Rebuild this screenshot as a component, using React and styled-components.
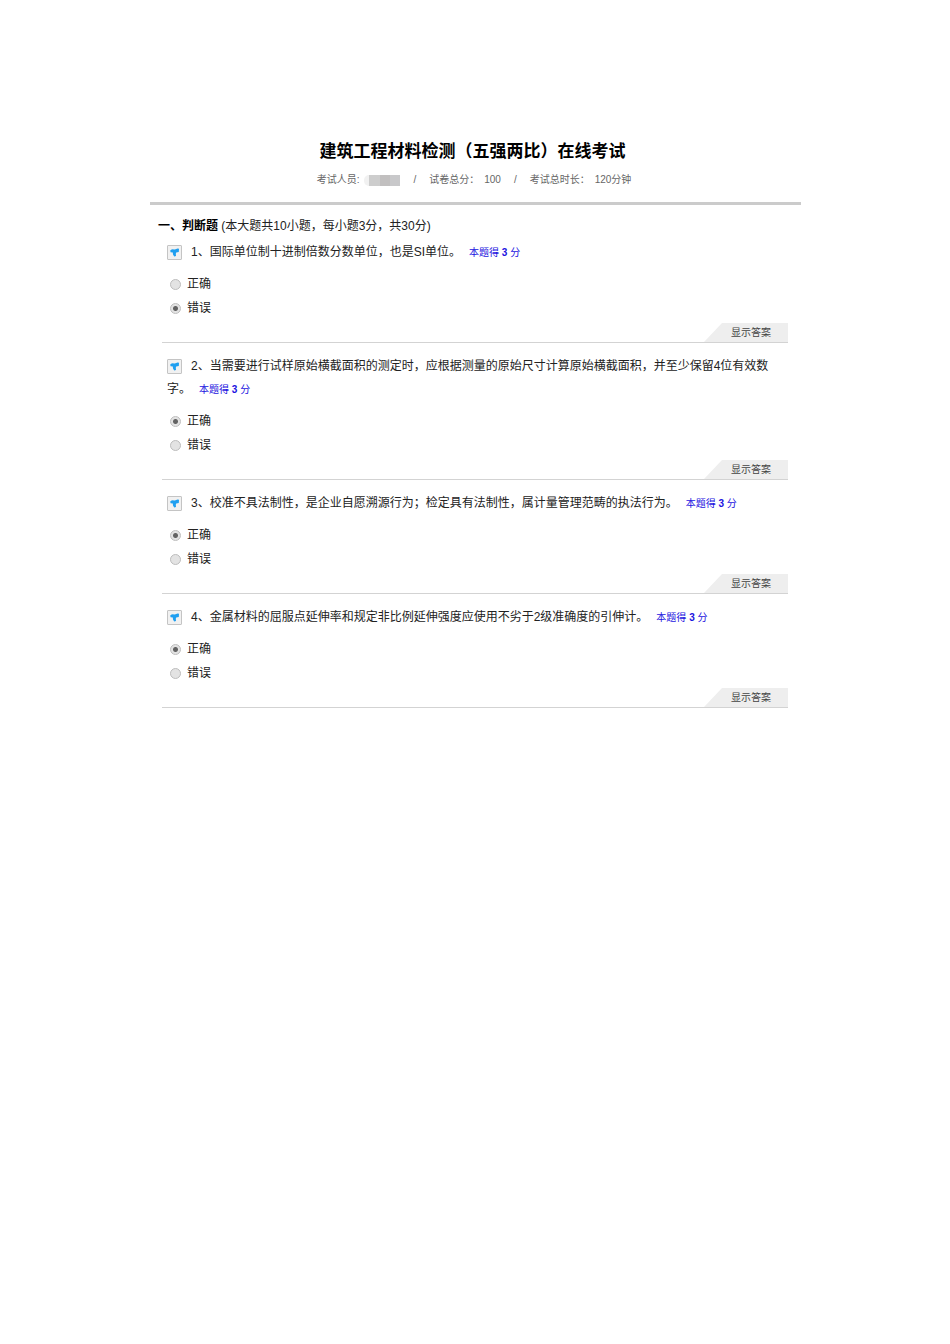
import React from 'react';
import styled, { createGlobalStyle } from 'styled-components';

const OPTIONS = ['正确', '错误'];

const QUESTIONS = [
    { text: '国际单位制十进制倍数分数单位，也是SI单位。', answer: '错误' },
    { text: '当需要进行试样原始横截面积的测定时，应根据测量的原始尺寸计算原始横截面积，并至少保留4位有效数字。', answer: '正确' },
    { text: '校准不具法制性，是企业自愿溯源行为；检定具有法制性，属计量管理范畴的执法行为。', answer: '正确' },
    { text: '金属材料的屈服点延伸率和规定非比例延伸强度应使用不劣于2级准确度的引伸计。', answer: '正确' },
];

const FlagIcon = () => (
    <svg width="13" height="13" viewBox="0 0 13 13" aria-hidden="true">
        <path
            d="M2.2 4.4 L4 3.2 L6.8 3.4 L9.6 2.4 L11 2.8 L10.8 6 L8.2 6.6 L7.8 7.8 L8 10 L6.2 10.4 L5 8.6 L4.8 6.6 L2.6 6.2 Z"
            fill="#1f9ff0"
        />
    </svg>
);

const Question = ({ number, text, answer }) => (
    <QuestionBlock>
        <QuestionText id={`question-${number}`}>
            <MarkButton type="button" aria-label="标记">
                <FlagIcon />
            </MarkButton>
            {`${number}、${text}`}
            <Score>本题得 <b>3</b> 分</Score>
        </QuestionText>
        <Options role="radiogroup" aria-labelledby={`question-${number}`}>
            {OPTIONS.map((option) => (
                <Option key={option}>
                    <Radio name={`q${number}`} defaultChecked={option === answer} />
                    {option}
                </Option>
            ))}
        </Options>
        <Footer>
            <AnswerButton type="button">显示答案</AnswerButton>
        </Footer>
    </QuestionBlock>
);

const App = () => (
    <>
        <GlobalStyle />
        <Page>
            <Header>
                <Title>建筑工程材料检测（五强两比）在线考试</Title>
                <Meta>
                    <MetaItem>考试人员:<Masked><i /><i /><i /></Masked></MetaItem>
                    <span>/</span>
                    <MetaItem>试卷总分：<span>100</span></MetaItem>
                    <span>/</span>
                    <MetaItem>考试总时长：<span>120分钟</span></MetaItem>
                </Meta>
            </Header>
            <Section>
                <SectionTitle><b>一、判断题</b> (本大题共10小题，每小题3分，共30分)</SectionTitle>
                <QuestionList>
                    {QUESTIONS.map((question, index) => (
                        <Question key={question.text} number={index + 1} {...question} />
                    ))}
                </QuestionList>
            </Section>
        </Page>
    </>
);

export default App

const GlobalStyle = createGlobalStyle`
    * {
        box-sizing: border-box;
    }

    body {
        margin: 0;
        background: #fff;
        color: #222;
        font: 12px/24px "Liberation Sans", "Noto Sans CJK SC", sans-serif;
    }

    button {
        font-family: inherit;
        cursor: pointer;
    }
`

const Page = styled.main`
    padding: 140px 149px 40px 150px;
`

const Header = styled.header`
    display: flex;
    flex-direction: column;
    align-items: center;
    padding-bottom: 12px;
    border-bottom: 3px solid #cbcbcb;
`

const Title = styled.h1`
    margin: 0 6px 6px 0;
    color: #000;
    font-size: 17px;
    line-height: 24px;
`

const Meta = styled.div`
    display: flex;
    gap: 13px;
    margin-right: 3px;
    color: #666;
    font-size: 10px;
    line-height: 20px;
`

const MetaItem = styled.span`
    display: flex;
    align-items: center;
    gap: 5px;
`

const Masked = styled.span`
    display: flex;
    width: 36px;
    height: 11px;
    padding-left: 5px;
    border-radius: 5px 0 0 5px;
    background: #f1f1f1;

    i {
        flex: 1;
        background: #cdcdcd;
    }

    i:nth-child(2) {
        background: #c1bfbf;
    }

    i:nth-child(3) {
        background: #c8c8ca;
    }
`

const Section = styled.section`
    padding: 9px 13px 0 12px;
`

const SectionTitle = styled.h2`
    margin: 0 0 3px -4px;
    font-size: 12px;
    font-weight: normal;
    line-height: 24px;

    b {
        color: #000;
    }
`

const QuestionList = styled.div`
    display: flex;
    flex-direction: column;
    gap: 12px;
`

const QuestionBlock = styled.article`
    border-bottom: 1px solid #d3d3d3;
`

const QuestionText = styled.p`
    margin: 0 0 8px;
    padding: 0 8px 0 5px;
    line-height: 23px;
`

const MarkButton = styled.button`
    display: inline-flex;
    align-items: center;
    justify-content: center;
    width: 15px;
    height: 15px;
    margin-right: 9px;
    padding: 0;
    border: 1px solid #c4c4c4;
    border-radius: 1px;
    background: #f1f1f1;
    vertical-align: middle;
`

const Score = styled.span`
    margin-left: 8px;
    color: #1a12e0;
    font-size: 10px;
`

const Options = styled.div`
    display: flex;
    flex-direction: column;
    align-items: flex-start;
    padding-left: 8px;
`

const Option = styled.label`
    display: flex;
    align-items: center;
    gap: 6px;
    line-height: 24px;
`

const Radio = styled.input.attrs({ type: 'radio' })`
    appearance: none;
    width: 11px;
    height: 11px;
    margin: 0;
    border: 1px solid #bdbdbd;
    border-radius: 50%;
    background: #e3e3e3;

    &:checked {
        background: radial-gradient(circle, #636363 0 2px, #e3e3e3 3px);
    }
`

const Footer = styled.div`
    display: flex;
    justify-content: flex-end;
    margin-top: 3px;
`

const AnswerButton = styled.button`
    height: 19px;
    padding: 0 17px 0 27px;
    border: 0;
    background: #eee;
    clip-path: polygon(18px 0, 100% 0, 100% 100%, 0 100%);
    color: #444;
    font-size: 10px;
    line-height: 19px;
`
